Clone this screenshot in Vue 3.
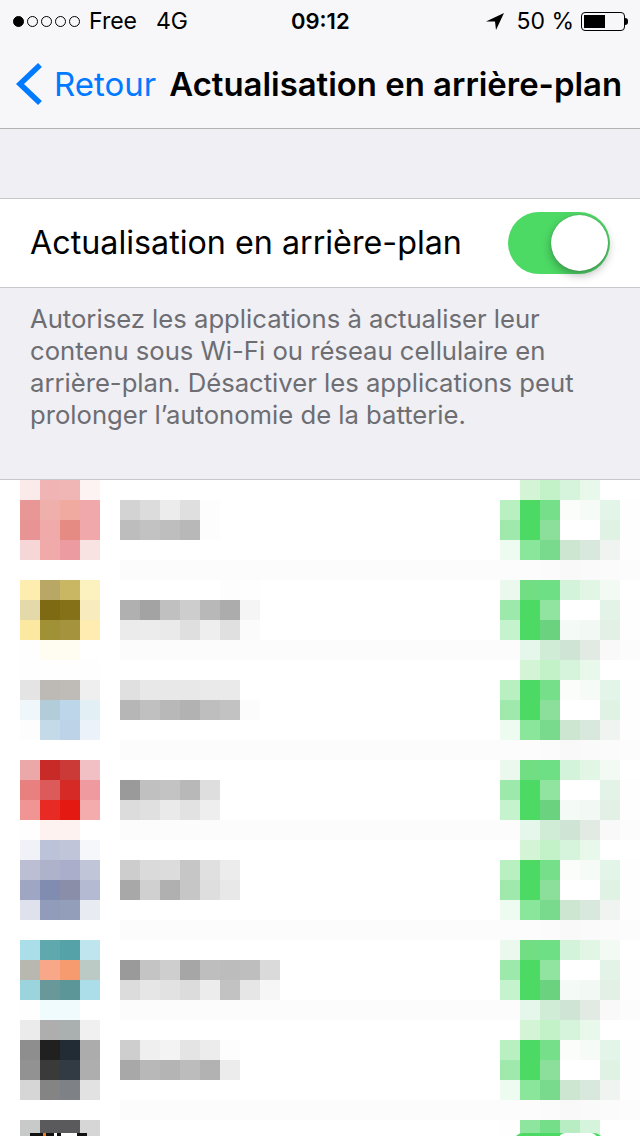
<template>
  <div class="screen">
    <header class="bar">
      <div class="status">
        <div class="status-left">
          <div class="dots">
            <i class="dot on"></i><i class="dot"></i><i class="dot"></i><i class="dot"></i><i class="dot"></i>
          </div>
          <span class="carrier">Free</span>
          <span class="network">4G</span>
        </div>
        <div class="clock">09:12</div>
        <div class="status-right">
          <svg class="arrow" width="18" height="17" viewBox="0 0 18 17">
            <path d="M18 0 L0 8.5 L9 8.5 L10 17 Z" fill="#000" />
          </svg>
          <span class="level">50 %</span>
          <div class="battery"><div class="charge"></div></div>
          <div class="cap"></div>
        </div>
      </div>
      <nav class="nav">
        <a class="back">
          <svg width="28" height="44" viewBox="0 0 28 44">
            <path d="M25 3 L5 22 L25 41" fill="none" stroke="#007aff" stroke-width="5.5" />
          </svg>
          <span>Retour</span>
        </a>
        <h1 class="title">Actualisation en arrière-plan</h1>
      </nav>
    </header>

    <section class="setting">
      <span class="setting-label">Actualisation en arrière-plan</span>
      <div class="toggle"><div class="knob"></div></div>
    </section>

    <p class="note">
      Autorisez les applications à actualiser leur contenu sous Wi-Fi ou réseau cellulaire en
      arrière-plan. Désactiver les applications peut prolonger l’autonomie de la batterie.
    </p>

    <section class="mosaic">
      <i
        v-for="cell in cells"
        :key="cell.key"
        :style="{ gridColumn: cell.col + 1, gridRow: cell.row + 1, background: cell.color }"
      ></i>
      <div class="peek">
        <b class="peek-orange"></b>
        <b class="peek-white small"></b>
        <b class="peek-white"></b>
      </div>
      <div class="peek-toggle"><div class="peek-knob"></div></div>
    </section>
  </div>
</template>

<script setup>
const band = '#fcfcfc'
const bandRows = [4, 8, 13, 17, 22, 26, 31]

const icons = [
  ['faeaea', 'f0b4b4', 'f0b6b6', 'fcf3f2'],
  ['e99696', 'efafaa', 'f0aaa0', 'f0a8aa'],
  ['e99494', 'f0aaaa', 'e58b84', 'f0a8aa'],
  ['f6d6d6', 'f0aaaa', 'ec9ca0', 'f8e2e2'],
  null,
  ['fdeeb0', 'b8a765', 'c9b764', 'fcf2c0'],
  ['e4d9a8', '7f6a14', '857118', 'f8ecbe'],
  ['fce8a0', 'a09036', 'a5933e', 'feecb0'],
  ['fefefe', 'fffcf2', 'fffcf2', 'ffffff'],
  ['fefefe', 'fefefe', 'fefefe', 'fefefe'],
  ['e4e4e4', 'bdb9b4', 'bfbbb6', 'efefef'],
  ['f0f7fb', 'b2ccda', 'bed6ea', 'e2eff5'],
  ['fdfdfd', 'c4dae8', 'bdd3e8', 'ebf2fa'],
  null,
  ['eaa8a8', 'c82a28', 'cc3a38', 'f0c0c4'],
  ['e88080', 'dc5a5a', 'd62a26', 'ee9a9e'],
  ['f09494', 'e82a24', 'e41a12', 'f4acac'],
  ['fefefe', 'fdf2f0', 'fdf2f0', 'ffffff'],
  ['f0f2f8', 'bcc2d8', 'c0c5da', 'f6f7fa'],
  ['bcbed4', 'aeb2ca', 'aaaeca', 'c0c5d8'],
  ['9ea6c4', '808cb0', '8a8ea8', 'b4bad2'],
  ['dfe2ec', '909cba', '929eba', 'e9ebf2'],
  null,
  ['aadfea', '5ea8ae', '55a2a8', 'bfe6ee'],
  ['b8b8b0', 'f8a888', 'f69a70', 'bccac6'],
  ['9cd4de', '68989a', '5c9698', 'acdeea'],
  ['fefefe', 'f0fbfd', 'f0fbfd', 'ffffff'],
  ['ebebeb', 'aeaeae', 'aab0b0', 'f0f0f0'],
  ['8e8e8e', '202020', '212c34', 'acacac'],
  ['929292', '3a3a3a', '323a44', 'aeaeae'],
  ['d6d6d6', '848484', '7e8286', 'e2e2e2'],
  null,
  ['c8caca', '5a5a5c', '5a5a5c', 'd6d6d6'],
]

const labels = {
  1: ['d3d3d3', 'dcdcdc', 'ececec', 'dfdfdf', 'fdfdfd'],
  2: ['bdbdbd', 'c2c2c2', 'bebebe', 'b8b8b8', 'fdfdfd'],
  5: ['ffffff', 'ffffff', 'ffffff', 'ffffff', 'ffffff', 'fdfdfd', 'fefefe'],
  6: ['b0b0b0', 'a3a3a3', 'c0c0c0', 'cdcdcd', 'b8b8b8', 'acacac', 'f5f5f5'],
  7: ['ebebeb', 'ececec', 'eaeaea', 'dfdfdf', 'eeeeee', 'e0e0e0', 'fbfbfb'],
  10: ['e0e0e0', 'e8e8e8', 'e8e8e8', 'e8e8e8', 'eaeaea', 'eaeaea'],
  11: ['b6b6b6', 'c0c0c0', 'b8b8b8', 'b2b2b2', 'bebebe', 'c2c2c2', 'fcfcfc'],
  15: ['9a9a9a', 'c0c0c0', 'c3c3c3', 'b8b8b8', 'dedede'],
  16: ['dcdcdc', 'e0e0e0', 'eaeaea', 'e2e2e2', 'eeeeee'],
  19: ['cdcdcd', 'dadada', 'dcdcdc', 'c6c6c6', 'e0e0e0', 'ececec'],
  20: ['a8a8a8', 'd0d0d0', 'b0b0b0', 'c6c6c6', 'dedede', 'e8e8e8'],
  24: ['9a9a9a', 'c4c4c4', 'cecece', 'a6a6a6', 'bebebe', 'bcbcbc', 'bebebe', 'dadada'],
  25: ['dcdcdc', 'e6e6e6', 'e2e2e2', 'dcdcdc', 'ececec', 'c2c2c2', 'e6e6e6', 'f6f6f6'],
  28: ['cecece', 'efefef', 'f3f3f3', 'e4e4e4', 'ececec', 'fdfdfd'],
  29: ['a8a8a8', 'b8b8b8', 'b4b4b4', 'bcbcbc', 'b2b2b2', 'ececec'],
}

// the right hand column repeats every 9 rows
const toggles = [
  ['ffffff', 'd3f5d5', 'c3f2c9', 'd6f3dc', 'e8f8eb', 'ffffff', 'ffffff'],
  ['b8f0c2', '4cd964', '76df89', 'fbfdfb', 'f6fbf7', 'e3f4e8', 'fefefe'],
  ['9fe9ac', '4cd964', '8bdf9b', 'ffffff', 'ffffff', 'dff2e4', 'fefefe'],
  ['eefbf0', '8ae69a', '79d98c', 'cde6d2', 'd8e8dc', 'eff4f0', 'fefefe'],
  ['fcfcfc', 'fcfcfc', 'fbfbfb', 'f9f9f9', 'fafafa', 'fbfbfb', 'fcfcfc'],
  ['ebf8ed', '72de84', '6fdf85', 'd3f3da', 'e2f6e6', 'f3faf4', 'ffffff'],
  ['9de8ab', '4cd964', '91e4a0', 'ffffff', 'ffffff', 'e3f3e7', 'fefefe'],
  ['c5f3cd', '4cd964', '6bd380', 'f4faf6', 'f2f8f3', 'e3f0e5', 'fefefe'],
  ['fcfcfc', 'e5f6ea', 'd0ecd7', 'cfe4d4', 'e2eae4', 'f9f9f9', 'fcfcfc'],
]
const lastToggle = ['fefefe', '8ee69e', '74df88', 'b8edc4', 'd4f4dc', 'ffffff', 'ffffff']

const cells = []
const add = (row, col, color) => {
  cells.push({ key: row + '-' + col, row, col, color })
}

icons.forEach((colors, row) => {
  if (bandRows.includes(row)) {
    for (let col = 6; col < 25; col++) add(row, col, band)
  }
  if (colors) colors.forEach((c, i) => add(row, 1 + i, '#' + c))
  if (labels[row]) labels[row].forEach((c, i) => add(row, 6 + i, '#' + c))
  const right = row === 32 ? lastToggle : toggles[row % 9]
  right.forEach((c, i) => add(row, 25 + i, '#' + c))
})
</script>

<style>
body {
  background: #fff;
}
</style>

<style scoped>
.screen {
  width: 640px;
  height: 1136px;
  overflow: hidden;
  background: #efeff4;
  font-family: Inter, "Liberation Sans", sans-serif;
  color: #000;
}
.bar {
  height: 128px;
  background: #f7f7f9;
  border-bottom: 1px solid #b2b2b2;
}
.status {
  height: 42px;
  display: flex;
  align-items: center;
  justify-content: space-between;
  padding: 0 12px 0 13px;
  font-size: 23px;
  position: relative;
}
.status-left {
  display: flex;
  align-items: center;
}
.dots {
  display: flex;
  gap: 3px;
  margin-right: 9px;
}
.dot {
  width: 11px;
  height: 11px;
  border: 1px solid #000;
  border-radius: 50%;
  box-sizing: border-box;
}
.dot.on {
  background: #000;
}
.network {
  margin-left: 19px;
}
.clock {
  position: absolute;
  left: 291px;
  font-size: 22px;
  font-weight: 600;
}
.status-right {
  display: flex;
  align-items: center;
}
.arrow {
  margin-right: 12px;
}
.level {
  margin-right: 7px;
}
.battery {
  width: 44px;
  height: 19px;
  border: 1px solid #000;
  border-radius: 4px;
  box-sizing: border-box;
  padding: 2px;
}
.charge {
  width: 21px;
  height: 100%;
  background: #000;
}
.cap {
  width: 3px;
  height: 7px;
  background: #000;
  border-radius: 0 3px 3px 0;
}
.nav {
  height: 84px;
  display: flex;
  align-items: center;
  padding: 0 0 0 15px;
}
.back {
  display: flex;
  align-items: center;
  color: #007aff;
  font-size: 33px;
  gap: 11px;
}
.title {
  margin: 0 0 0 13px;
  font-size: 32.9px;
  font-weight: 600;
  white-space: nowrap;
}
.setting {
  margin-top: 69px;
  height: 88px;
  background: #fff;
  border-top: 1px solid #c8c7cc;
  border-bottom: 1px solid #c8c7cc;
  display: flex;
  align-items: center;
  justify-content: space-between;
  padding: 0 30px 0 30px;
  font-size: 32.25px;
}
.setting-label {
  margin-top: -2px;
}
.toggle {
  width: 102px;
  height: 62px;
  border-radius: 31px;
  background: linear-gradient(90deg, #4cd964 40%, #52d86a 100%);
  position: relative;
}
.knob {
  position: absolute;
  right: 2px;
  top: 3px;
  width: 57px;
  height: 56px;
  border-radius: 50%;
  background: #fff;
  box-shadow: 0 4px 10px rgba(0, 0, 0, 0.3), 0 0 1px rgba(0, 0, 0, 0.4);
}
.note {
  margin: 0;
  height: 191px;
  box-sizing: border-box;
  padding: 15px 30px 0;
  font-size: 25.65px;
  line-height: 32px;
  color: #6d6d72;
}
.mosaic {
  position: relative;
  height: 656px;
  background: #fff;
  border-top: 1px solid #c8c7cc;
  display: grid;
  grid-template-columns: repeat(32, 20px);
  grid-auto-rows: 20px;
  overflow: hidden;
}
.mosaic i {
  display: block;
}
.peek {
  position: absolute;
  left: 30px;
  top: 653px;
  width: 57px;
  height: 4px;
  background: #111;
}
.peek-orange {
  position: absolute;
  left: 13px;
  top: 0;
  width: 3px;
  height: 3px;
  background: #f07d1a;
}
.peek-white {
  position: absolute;
  left: 31px;
  top: 0;
  width: 16px;
  height: 3px;
  background: #fff;
}
.peek-white.small {
  left: 24px;
  width: 3px;
}
.peek-toggle {
  position: absolute;
  left: 513px;
  top: 653px;
  width: 91px;
  height: 20px;
  background: #4cd964;
  border-radius: 10px 10px 0 0;
}
.peek-knob {
  position: absolute;
  left: 46px;
  top: 0;
  width: 38px;
  height: 20px;
  background: #fff;
  border-radius: 6px 6px 0 0;
}
</style>
